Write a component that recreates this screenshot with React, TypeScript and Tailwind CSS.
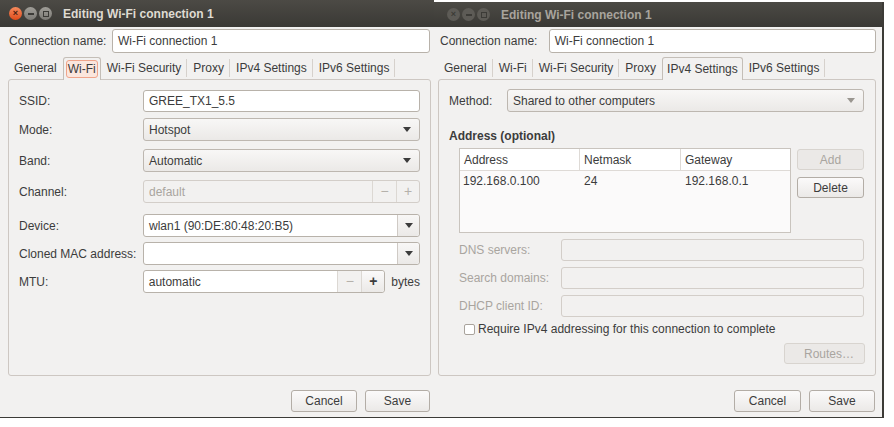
import React from 'react';

const Arrow = () => (
  <svg width="8" height="5" viewBox="0 0 8 5" className="shrink-0">
    <path d="M0 0 L8 0 L4 5 Z" fill="#3c3c3c" />
  </svg>
);

const TitleBar: React.FC<{ active?: boolean }> = ({ active }) => (
  <div
    className={`flex h-full items-center bg-gradient-to-b from-[#4c4a45] to-[#3a3935] ${
      active ? 'pl-[9px]' : 'pl-[13px]'
    }`}
  >
    <div className="flex items-center gap-[2px]">
      <span
        className={
          active
            ? 'flex h-[13px] w-[13px] items-center justify-center rounded-full bg-gradient-to-b from-[#f58a5c] to-[#df4a16] text-[9px] leading-none font-bold text-[#4a2010]'
            : 'flex h-[13px] w-[13px] items-center justify-center rounded-full bg-[#5d5b56] text-[9px] leading-none font-bold text-[#3c3b37]'
        }
      >
        ×
      </span>
      <span
        className={
          active
            ? 'flex h-[13px] w-[13px] items-center justify-center rounded-full bg-gradient-to-b from-[#a09e98] to-[#7c7a75]'
            : 'flex h-[13px] w-[13px] items-center justify-center rounded-full bg-[#5d5b56]'
        }
      >
        <span className="h-[2px] w-[6px] bg-[#3c3b37]" />
      </span>
      <span
        className={
          active
            ? 'flex h-[13px] w-[13px] items-center justify-center rounded-full bg-gradient-to-b from-[#a09e98] to-[#7c7a75]'
            : 'flex h-[13px] w-[13px] items-center justify-center rounded-full bg-[#5d5b56]'
        }
      >
        <span className="h-[6px] w-[6px] border border-[#3c3b37]" />
      </span>
    </div>
    <span
      className={
        active
          ? 'ml-[11px] text-[12px] font-bold text-[#dfdbd2]'
          : 'ml-[11px] text-[12px] font-bold text-[#a8a49d]'
      }
    >
      Editing Wi-Fi connection 1
    </span>
  </div>
);

const Entry: React.FC<{ value?: string; w: string; disabled?: boolean; h?: string }> = ({ value, w, disabled, h }) => (
  <div
    className={`flex ${h ?? 'h-[22px]'} ${w} items-center rounded-[3px] border px-[5px] ${
      disabled ? 'border-[#d3cec9] bg-[#f2f1f0] text-[#a9a59f]' : 'border-[#b8b2aa] bg-white text-[#3c3c3c]'
    }`}
  >
    {value}
  </div>
);

const Select: React.FC<{ value: string; w: string; faint?: boolean }> = ({ value, w, faint }) => (
  <div
    className={`flex h-[23px] ${w} items-center justify-between rounded-[3px] border border-[#bdb7b0] bg-gradient-to-b from-[#f8f7f6] to-[#ebe9e7] pl-[5px] pr-[8px] text-[#3c3c3c]`}
  >
    <span>{value}</span>
    {faint ? (
      <svg width="8" height="5" viewBox="0 0 8 5">
        <path d="M0 0 L8 0 L4 5 Z" fill="#9a9690" />
      </svg>
    ) : (
      <Arrow />
    )}
  </div>
);

const Combo: React.FC<{ value?: string }> = ({ value }) => (
  <div className="flex h-[23px] w-[277px] rounded-[3px] border border-[#b8b2aa] bg-white text-[#3c3c3c]">
    <span className="flex flex-1 items-center px-[5px]">{value}</span>
    <span className="flex w-[22px] items-center justify-center rounded-r-[3px] border-l border-[#cfcac5] bg-gradient-to-b from-[#f8f7f6] to-[#ebe9e7]">
      <Arrow />
    </span>
  </div>
);

const Button: React.FC<{ label: string; w: string; h?: string; disabled?: boolean; right?: boolean }> = ({
  label,
  w,
  h,
  disabled,
  right,
}) => (
  <div
    className={`flex ${h ?? 'h-[22px]'} ${w} items-center ${right ? 'justify-end pr-[10px]' : 'justify-center'} rounded-[3px] border ${
      disabled
        ? 'border-[#d8d4cf] bg-[#ebe9e7] text-[#a9a59f]'
        : 'border-[#b3ada6] bg-gradient-to-b from-[#fbfafa] to-[#ebe9e7] text-[#3c3c3c]'
    }`}
  >
    {label}
  </div>
);

const Tabs: React.FC<{ labels: string[]; active: number; focus?: boolean }> = ({ labels, active, focus }) => (
  <div className="flex h-[22px] items-stretch">
    {labels.map((l, i) =>
      i === active ? (
        <div
          key={l}
          className="relative z-10 -mb-px flex items-center rounded-t-[3px] border border-b-0 border-[#c4beb7] bg-[#f2f1f0] px-[2px] text-[#3c3c3c]"
        >
          <span
            className={
              focus
                ? 'rounded-[3px] border border-[#f0a48a] bg-[#fbe6dd] px-[1px] leading-[16px]'
                : 'border border-transparent px-[1px] leading-[16px]'
            }
          >
            {l}
          </span>
        </div>
      ) : (
        <div key={l} className="flex items-center pl-[6px] text-[#3c3c3c]">
          <span>{l}</span>
          <span
            className={i + 1 === active ? 'ml-[5px] h-[18px] w-px bg-transparent' : 'ml-[5px] h-[18px] w-px bg-[#d6d1cc]'}
          />
        </div>
      ),
    )}
  </div>
);

const tabLabels = ['General', 'Wi-Fi', 'Wi-Fi Security', 'Proxy', 'IPv4 Settings', 'IPv6 Settings'];

const Spin: React.FC<{ value: string; w: string; disabled?: boolean }> = ({ value, w, disabled }) => (
  <div
    className={`flex h-[23px] ${w} rounded-[3px] border ${
      disabled ? 'border-[#d3cec9] bg-[#f2f1f0]' : 'border-[#b8b2aa] bg-white'
    }`}
  >
    <span className={`flex flex-1 items-center px-[5px] ${disabled ? 'text-[#a9a59f]' : 'text-[#3c3c3c]'}`}>
      {value}
    </span>
    <span
      className={`flex w-[24px] items-center justify-center border-l text-[14px] ${
        disabled ? 'border-[#dcd8d3] text-[#b5b1ab]' : 'border-[#dcd8d3] bg-[#f2f1f0] text-[#b5b1ab]'
      }`}
    >
      −
    </span>
    <span
      className={`flex w-[23px] items-center justify-center rounded-r-[3px] border-l text-[14px] ${
        disabled
          ? 'border-[#dcd8d3] text-[#b5b1ab]'
          : 'border-[#dcd8d3] bg-gradient-to-b from-[#fbfafa] to-[#ebe9e7] font-bold text-[#3c3c3c]'
      }`}
    >
      +
    </span>
  </div>
);

const Row: React.FC<{ label: string; mt: string; children: React.ReactNode }> = ({ label, mt, children }) => (
  <div className={`flex items-center ${mt}`}>
    <span className="w-[124px] text-[#3c3c3c]">{label}</span>
    {children}
  </div>
);

const WifiWindow = () => (
  <div className="flex h-[418px] w-[434px] shrink-0 flex-col border-b border-[#3c3b37] bg-[#f2f1f0]">
    <div className="h-[27px]">
      <TitleBar active />
    </div>
    <div className="flex flex-1 flex-col pl-[8px] pr-[3px]">
      <div className="mt-[2px] flex items-center">
        <span className="w-[104px] pl-[1px] text-[#3c3c3c]">Connection name:</span>
        <Entry value="Wi-Fi connection 1" w="w-[318px]" h="h-[24px]" />
      </div>
      <div className="mt-[4px]">
        <Tabs labels={tabLabels} active={1} focus />
      </div>
      <div className="flex h-[297px] w-[423px] flex-col rounded-[3px] border border-[#cdc7c2] px-[10px] pt-[10px]">
        <Row label="SSID:" mt="mt-0">
          <Entry value="GREE_TX1_5.5" w="w-[277px]" />
        </Row>
        <Row label="Mode:" mt="mt-[6px]">
          <Select value="Hotspot" w="w-[277px]" />
        </Row>
        <Row label="Band:" mt="mt-[8px]">
          <Select value="Automatic" w="w-[277px]" />
        </Row>
        <Row label="Channel:" mt="mt-[8px]">
          <Spin value="default" w="w-[277px]" disabled />
        </Row>
        <Row label="Device:" mt="mt-[11px]">
          <Combo value="wlan1 (90:DE:80:48:20:B5)" />
        </Row>
        <Row label="Cloned MAC address:" mt="mt-[5px]">
          <Combo />
        </Row>
        <Row label="MTU:" mt="mt-[5px]">
          <Spin value="automatic" w="w-[243px]" />
          <span className="ml-[6px] text-[#3c3c3c]">bytes</span>
        </Row>
      </div>
      <div className="mt-[14px] flex justify-end gap-[8px] pr-[1px]">
        <Button label="Cancel" w="w-[66px]" />
        <Button label="Save" w="w-[65px]" />
      </div>
    </div>
  </div>
);

const DisabledRow: React.FC<{ label: string }> = ({ label }) => (
  <div className="mt-[6px] flex items-center">
    <span className="w-[102px] text-[#a9a59f]">{label}</span>
    <Entry w="w-[303px]" disabled />
  </div>
);

const Ipv4Window = () => (
  <div className="mt-[2px] flex h-[416px] w-[450px] shrink-0 flex-col border-r-2 border-b border-[#3c3b37] bg-[#f2f1f0]">
    <div className="h-[25px]">
      <TitleBar />
    </div>
    <div className="flex flex-1 flex-col pl-[4px] pr-[6px]">
      <div className="mt-[2px] flex items-center">
        <span className="w-[111px] pl-[2px] text-[#3c3c3c]">Connection name:</span>
        <Entry value="Wi-Fi connection 1" w="w-[328px]" h="h-[24px]" />
      </div>
      <div className="mt-[4px]">
        <Tabs labels={tabLabels} active={4} />
      </div>
      <div className="flex h-[297px] w-[438px] flex-col rounded-[3px] border border-[#cdc7c2] px-[10px] pt-[9px]">
        <div className="flex items-center">
          <span className="w-[58px] text-[#3c3c3c]">Method:</span>
          <Select value="Shared to other computers" w="w-[357px]" faint />
        </div>
        <div className="mt-[15px] font-bold text-[#3c3c3c]">Address (optional)</div>
        <div className="mt-[3px] flex pl-[10px]">
          <div className="flex h-[85px] w-[332px] flex-col border border-[#c9c4be] bg-[#fbfafa] text-[#3c3c3c]">
            <div className="flex h-[22px] border-b border-[#dedad6] bg-white">
              <span className="flex w-[120px] items-center border-r border-[#dedad6] pl-[4px]">Address</span>
              <span className="flex w-[101px] items-center border-r border-[#dedad6] pl-[4px]">Netmask</span>
              <span className="flex flex-1 items-center pl-[4px]">Gateway</span>
            </div>
            <div className="flex h-[20px] items-center">
              <span className="w-[120px] pl-[3px]">192.168.0.100</span>
              <span className="w-[101px] pl-[4px]">24</span>
              <span className="pl-[4px]">192.168.0.1</span>
            </div>
          </div>
          <div className="ml-[6px] flex flex-col gap-[7px] pt-px">
            <Button label="Add" w="w-[67px]" h="h-[21px]" disabled />
            <Button label="Delete" w="w-[67px]" h="h-[21px]" />
          </div>
        </div>
        <div className="pl-[10px]">
          <DisabledRow label="DNS servers:" />
          <DisabledRow label="Search domains:" />
          <DisabledRow label="DHCP client ID:" />
          <div className="mt-[3px] flex items-center pl-[5px] text-[#3c3c3c]">
            <span className="h-[11px] w-[11px] rounded-[2px] border border-[#a9a39c] bg-white" />
            <span className="ml-[3px]">Require IPv4 addressing for this connection to complete</span>
          </div>
          <div className="mt-[5px] flex justify-end">
            <Button label="Routes…" w="w-[81px]" h="h-[21px]" disabled right />
          </div>
        </div>
      </div>
      <div className="mt-[14px] flex justify-end gap-[8px] pr-[1px]">
        <Button label="Cancel" w="w-[67px]" />
        <Button label="Save" w="w-[66px]" />
      </div>
    </div>
  </div>
);

export default function App() {
  return (
    <div className="flex h-[427px] w-[894px] items-start overflow-hidden bg-white font-['Liberation_Sans',sans-serif] text-[12px]">
      <WifiWindow />
      <Ipv4Window />
    </div>
  );
}
